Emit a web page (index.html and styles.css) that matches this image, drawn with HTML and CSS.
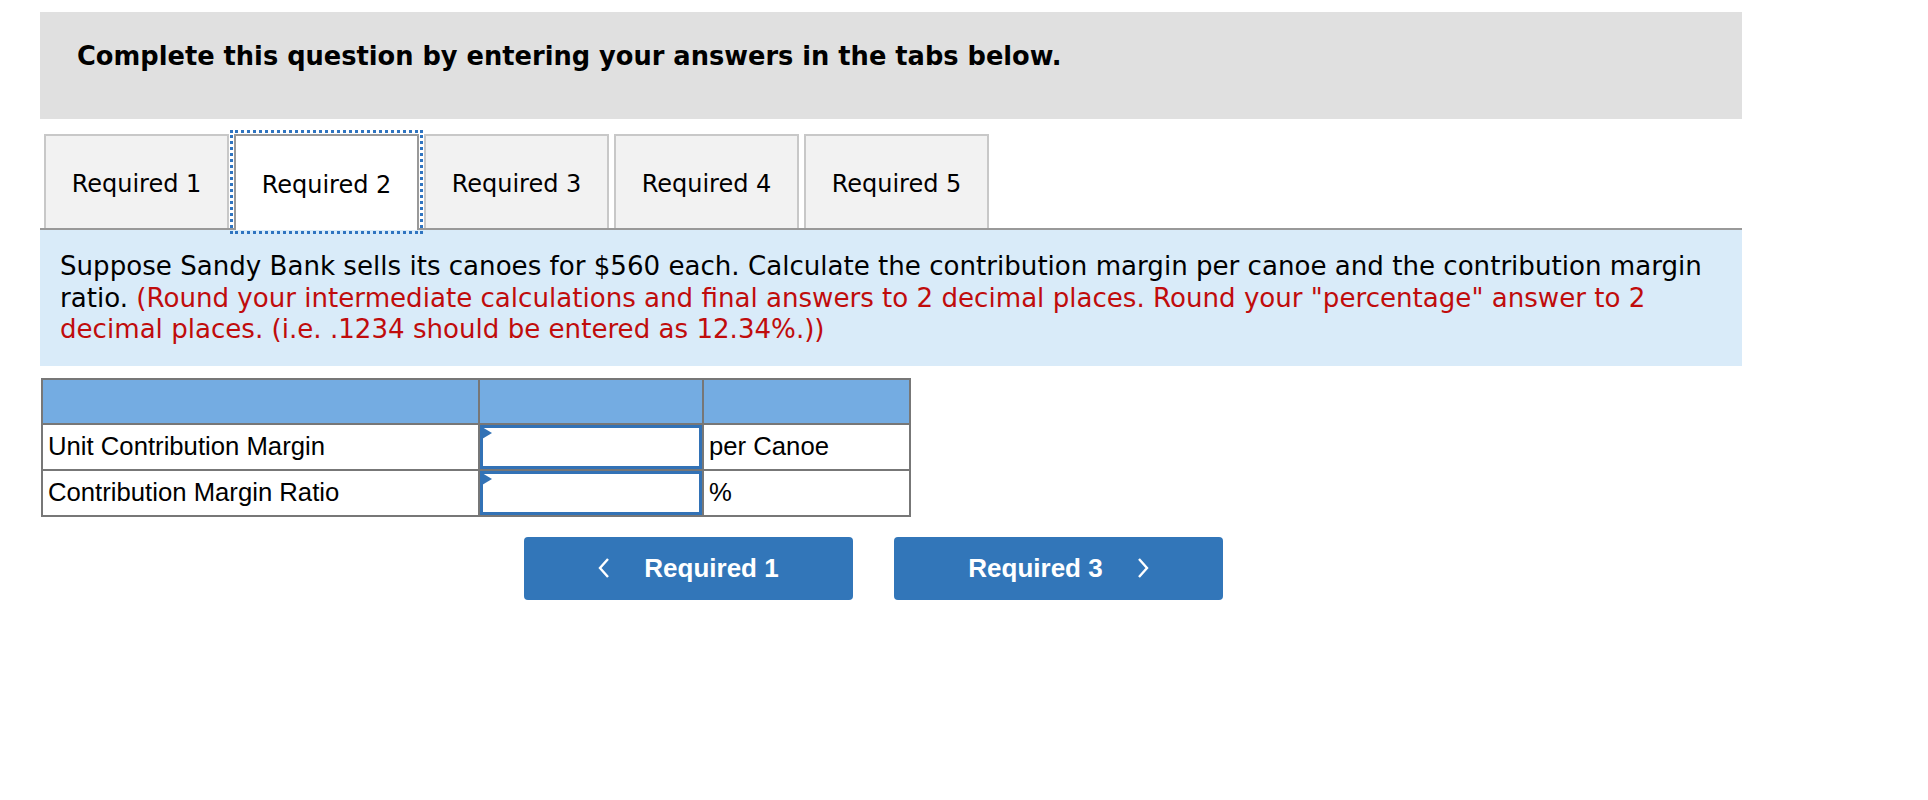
FILE: index.html
```html
<!DOCTYPE html>
<html>
<head>
<meta charset="utf-8">
<link rel="stylesheet" href="styles.css">
</head>
<body>
<div class="page">
  <div class="banner">Complete this question by entering your answers in the tabs below.</div>
  <div class="tabs">
    <div class="tab">Required 1</div>
    <div class="tab active">Required 2</div>
    <div class="tab">Required 3</div>
    <div class="tab">Required 4</div>
    <div class="tab">Required 5</div>
  </div>
  <div class="info">Suppose Sandy Bank sells its canoes for $560 each. Calculate the contribution margin per canoe and the contribution margin ratio. <span class="red">(Round your intermediate calculations and final answers to 2 decimal places. Round your "percentage" answer to 2 decimal places. (i.e. .1234 should be entered as 12.34%.))</span></div>
  <table class="grid">
    <tr class="head"><td class="c1"></td><td class="c2"></td><td class="c3"></td></tr>
    <tr><td class="c1 label">Unit Contribution Margin</td><td class="c2 inp"><div class="box"><span class="flag"></span></div></td><td class="c3 label">per Canoe</td></tr>
    <tr><td class="c1 label">Contribution Margin Ratio</td><td class="c2 inp"><div class="box"><span class="flag"></span></div></td><td class="c3 label">%</td></tr>
  </table>
  <div class="nav">
    <div class="btn"><svg class="chev" width="12" height="22" viewBox="0 0 12 22"><polyline points="10,2 2,11 10,20" fill="none" stroke="#fff" stroke-width="2.4"/></svg><span>Required 1</span></div>
    <div class="btn"><span>Required 3</span><svg class="chev" width="12" height="22" viewBox="0 0 12 22"><polyline points="2,2 10,11 2,20" fill="none" stroke="#fff" stroke-width="2.4"/></svg></div>
  </div>
</div>
</body>
</html>
```
FILE: styles.css
```css
html, body { margin: 0; padding: 0; background: #fff; }
.page { padding: 12px 0 0 40px; width: 1702px; font-family: "DejaVu Sans", Verdana, sans-serif; color: #000; }
.banner { height: 107px; box-sizing: border-box; background: #e0e0e0; padding: 29px 0 0 37px; font-weight: bold; font-size: 25.7px; line-height: 31px; }
.tabs { display: flex; gap: 5px; margin-top: 15px; padding-left: 4px; border-bottom: 2px solid #999; height: 94px; }
.tab { width: 185px; box-sizing: border-box; height: 94px; border: 2px solid #c8c8c8; border-bottom: none; background: #f2f2f2; display: flex; align-items: center; justify-content: center; font-size: 24px; padding-top: 3px; }
.tab.active { background: #fff; border-color: #999; outline: 3px dotted #2f74c0; outline-offset: 1px; position: relative; z-index: 1; height: 96px; margin-bottom: -2px; }
.info { background: #d9ebf9; padding: 21px 20px 20px 20px; font-size: 26.1px; line-height: 31.5px; }
.red { color: #c00c0c; }
.grid { border-collapse: collapse; margin: 12px 0 0 1px; font-family: "Liberation Sans", Arial, sans-serif; font-size: 25.7px; }
.grid td { border: 2px solid #777; padding: 0; height: 43px; }
.grid .head td { background: #74ace2; height: 43px; }
.c1 { width: 430px; }
.c2 { width: 222px; }
.c3 { width: 200px; }
.label { padding-left: 5px !important; vertical-align: middle; }
.inp { position: relative; }
.box { box-sizing: border-box; height: 44px; border: 3px solid #3272b6; background: #fff; position: relative; }
.flag { position: absolute; left: -1px; top: -1px; width: 0; height: 0; border-top: 6px solid transparent; border-bottom: 6px solid transparent; border-left: 10px solid #3272b6; }
.nav { display: flex; gap: 41px; margin-top: 20px; padding-left: 484px; }
.btn { width: 329px; height: 63px; background: #3276b9; border-radius: 4px; display: flex; align-items: center; justify-content: center; gap: 34px; color: #fff; font-family: "Liberation Sans", Arial, sans-serif; font-weight: bold; font-size: 26px; }
.chev { display: block; }
```
